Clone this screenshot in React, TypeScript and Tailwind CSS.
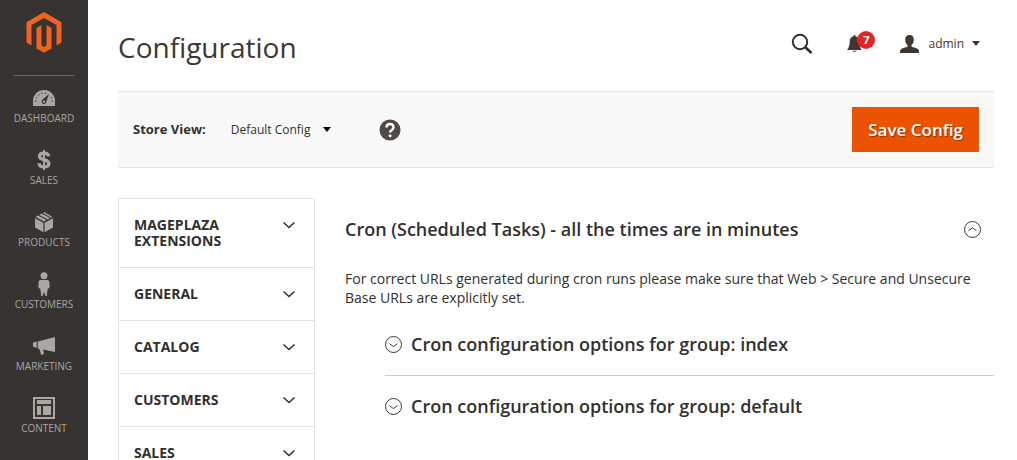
import type { ReactNode } from "react";

const menu: { label: string; icon: ReactNode }[] = [
  {
    label: "DASHBOARD",
    icon: (
      <svg width="22" height="16" viewBox="0 0 22 16" fill="currentColor">
        <path d="M0 16v-5a11 11 0 0 1 22 0v5z" />
        <g fill="#373330">
          <circle cx="2.8" cy="11" r=".7" />
          <circle cx="3.6" cy="7.6" r=".7" />
          <circle cx="5.8" cy="4.8" r=".7" />
          <circle cx="9" cy="3.2" r=".7" />
          <circle cx="12.6" cy="3.2" r=".7" />
          <circle cx="18.4" cy="7.6" r=".7" />
          <circle cx="19.2" cy="11" r=".7" />
          <path d="M16 4l-2.6 7.4a2.4 2.4 0 1 1-3.8-1.8zM11 10.4a1.2 1.2 0 1 0 .1 0z" fillRule="evenodd" />
        </g>
      </svg>
    ),
  },
  {
    label: "SALES",
    icon: (
      <svg width="14" height="22" viewBox="0 0 14 22" fill="none" stroke="currentColor">
        <path d="M7 1v20" strokeWidth="2" />
        <path
          d="M11.7 7.4C11.4 5 9.6 4.100 7 4.100S2.500 5.200 2.500 7.300c0 4.900 9.400 2.300 9.400 7.200 0 2.300-2 3.400-4.900 3.400s-4.800-1.300-5-3.800"
          strokeWidth="3.200"
        />
      </svg>
    ),
  },
  {
    label: "PRODUCTS",
    icon: (
      <svg width="20" height="22" viewBox="0 0 20 22" fill="currentColor">
        <path d="M9.400 21.300L1 16.600V7.200l8.400 4.500zM10.600 21.300l8.400-4.700V7.200l-8.400 4.500z" />
        <path d="M1.600 6l2.500-1.400 8.300 4.500L10 10.500zM5.400 3.900L7.700 2.600l8.300 4.600-2.300 1.200zM9 1.900L10.300 1.100l8.100 4.900-1.200.7z" />
      </svg>
    ),
  },
  {
    label: "CUSTOMERS",
    icon: (
      <svg width="12" height="25" viewBox="0 0 12 25" fill="currentColor">
        <circle cx="6" cy="3.700" r="3.500" />
        <path d="M3 8h6c1.700 0 2.500 1 2.500 2.500V16l-1.800.800L8.700 24H7.300L6 19.500 4.700 24H3.300l-1-7.200L.5 16v-5.500C.5 9 1.300 8 3 8z" />
      </svg>
    ),
  },
  {
    label: "MARKETING",
    icon: (
      <svg width="22" height="18" viewBox="0 0 22 18" fill="currentColor">
        <path d="M0 5.500L3.800 4.500v6.200L0 9.800zM4.800 4.400L22 0v15L10 12.400l1.100 4.600-2.900 1-2-6.200-1.400-.4z" />
      </svg>
    ),
  },
  {
    label: "CONTENT",
    icon: (
      <svg width="22" height="22" viewBox="0 0 22 22" fill="currentColor">
        <path d="M0 0h22v22H0zM2 2v18h18V2z" fillRule="evenodd" />
        <path d="M4 3h14v4H4zM4 9h4v9H4zM10 9h8v9h-8z" />
      </svg>
    ),
  },
];

const tabs = ["MAGEPLAZA EXTENSIONS", "GENERAL", "CATALOG", "CUSTOMERS", "SALES"];

const groups = [
  "Cron configuration options for group: index",
  "Cron configuration options for group: default",
];

function CircleArrow({ up = false }: { up?: boolean }) {
  return (
    <svg width="17" height="17" viewBox="0 0 17 17" fill="none" stroke="#41362f" className="shrink-0">
      <circle cx="8.500" cy="8.500" r="8" />
      <path d={up ? "M4.500 9.700l4-2.900 4 2.900" : "M4.500 7.700l4 2.900 4-2.900"} />
    </svg>
  );
}

function Caret() {
  return (
    <svg width="8" height="5" viewBox="0 0 8 5" fill="currentColor">
      <path d="M0 0h8L4 5z" />
    </svg>
  );
}

function Sidebar() {
  return (
    <nav className="w-[88px] shrink-0 bg-[#373330]">
      <a href="#" aria-label="Home" className="mx-[14px] flex h-[76px] justify-center border-b border-[#736963] pt-3">
        <svg width="36" height="41" viewBox="0 0 36 41" fill="#f26322">
          <path d="M18 0l17.500 10.200v20.400l-5 2.900V13.100L18 5.900 5.500 13.100v20.400l-5-2.900V10.200z" />
          <path d="M10.500 16l5-2.900v20.400l2.500 1.500 2.500-1.500V13.100l5 2.900v20.400L18 40.800l-7.500-4.400z" />
        </svg>
      </a>
      <ul>
        {menu.map((item) => (
          <li key={item.label}>
            <a href="#" className="flex h-[62px] flex-col items-center pt-[10px] text-[10px] leading-4 text-[#aaa6a0]">
              <span className="flex h-6 items-center">{item.icon}</span>
              {item.label}
            </a>
          </li>
        ))}
      </ul>
    </nav>
  );
}

function Header() {
  return (
    <header className="flex h-[91px] items-center text-[#41362f]">
      <h1 className="flex-1 pt-[2px] text-[28px] leading-9">Configuration</h1>
      <div className="mr-[14px] flex items-center pb-1">
        <button type="button" aria-label="Search">
          <svg width="22" height="22" viewBox="0 0 22 22" fill="none" stroke="#33302d">
            <circle cx="9" cy="9" r="7.200" strokeWidth="2" />
            <path d="M14 14l6.500 6" strokeWidth="2.700" />
          </svg>
        </button>
        <button type="button" aria-label="Notifications" className="relative ml-[34px]">
          <svg width="15" height="18" viewBox="0 0 15 18" fill="currentColor">
            <path d="M7.500 0c.8 0 1 .6 1 1.200 2.500.6 3.700 2.600 3.700 5.300 0 4 .7 6 2.600 8.500H0c1.900-2.500 2.700-4.500 2.700-8.500C2.700 3.800 4 1.800 6.500 1.200 6.500.6 6.700 0 7.500 0zM5.500 15.700h4c-.3 1.400-3.700 1.400-4 0z" />
          </svg>
          <span className="absolute -top-1 left-[10px] size-[18px] rounded-full bg-[#e22626] text-center text-[11px] leading-[18px] font-bold text-white">
            7
          </span>
        </button>
        <button type="button" className="ml-[38px] flex items-center text-[12px]">
          <svg width="19" height="18" viewBox="0 0 19 18" fill="currentColor">
            <path d="M9.500 0c2.900 0 4.300 1.900 4.300 4.700 0 2.300-.9 4.200-2.300 5.200v1.600c1 1.100 7.500 1.400 7.500 4.500v2H0v-2c0-3.100 6.500-3.400 7.500-4.500V9.900C6.100 8.900 5.200 7 5.200 4.700 5.200 1.900 6.600 0 9.500 0z" />
          </svg>
          <span className="mr-[8px] ml-[9px]">admin</span>
          <Caret />
        </button>
      </div>
    </header>
  );
}

function Toolbar() {
  return (
    <div className="flex items-center border-y border-[#e3e3e3] bg-[#f8f8f8] p-[15px]">
      <label htmlFor="store-view" className="text-[13px] font-bold text-[#303030]">
        Store View:
      </label>
      <div className="relative ml-[25px] flex items-center">
        <select id="store-view" className="appearance-none bg-transparent pr-5 text-[12px] text-[#303030]">
          <option>Default Config</option>
        </select>
        <span className="pointer-events-none absolute right-0 text-black">
          <Caret />
        </span>
      </div>
      <button type="button" aria-label="Help" className="ml-12">
        <svg width="22" height="22" viewBox="0 0 22 22">
          <circle cx="11" cy="11" r="10.500" fill="#514943" />
          <path d="M7.500 8.500c0-4.600 7-4.600 7 0 0 2.600-3.400 2.400-3.400 5" fill="none" stroke="#fff" strokeWidth="2.500" />
          <circle cx="11.100" cy="16.700" r="1.500" fill="#fff" />
        </svg>
      </button>
      <button
        type="button"
        className="ml-auto h-[45px] bg-[#eb5202] px-4 text-[17px] leading-6 font-semibold text-white [text-shadow:1px_1px_1px_rgba(0,0,0,0.4)]"
      >
        Save Config
      </button>
    </div>
  );
}

function ConfigTabs() {
  return (
    <div className="w-[197px] shrink-0 border border-[#e3e3e3]">
      {tabs.map((tab) => (
        <button
          key={tab}
          type="button"
          className="flex w-full items-start justify-between border-b border-[#e3e3e3] py-[18px] pr-[18px] pl-[15px] text-left text-[14px] leading-4 font-bold text-[#303030]"
        >
          <span className="w-[110px]">{tab}</span>
          <svg width="14" height="16" viewBox="0 0 14 16" fill="none" stroke="#303030" strokeWidth="1.500">
            <path d="M1.500 5.500L7 10.500l5.500-5" />
          </svg>
        </button>
      ))}
    </div>
  );
}

function CronSection() {
  return (
    <section className="min-w-0 flex-1 pt-[19px] text-[#303030]">
      <button type="button" className="flex w-full items-center justify-between pr-[13px] text-left">
        <h2 className="text-[18px] leading-6 font-semibold">
          Cron (Scheduled Tasks) - all the times are in minutes
        </h2>
        <CircleArrow up />
      </button>
      <p className="mt-[28px] pr-4 text-[14px] leading-[19px]">
        For correct URLs generated during cron runs please make sure that Web &gt; Secure and Unsecure Base URLs are
        explicitly set.
      </p>
      <div className="mt-[7px] ml-10 divide-y divide-[#cccccc]">
        {groups.map((group) => (
          <button key={group} type="button" className="flex w-full items-center gap-[9px] py-[18px] text-left">
            <CircleArrow />
            <h3 className="text-[18px] leading-[25px] font-semibold">{group}</h3>
          </button>
        ))}
      </div>
    </section>
  );
}

export default function App() {
  return (
    <div className="flex h-screen overflow-hidden bg-white font-['Open_Sans',sans-serif]">
      <Sidebar />
      <main className="min-w-0 flex-1 pr-[23px] pl-[30px]">
        <Header />
        <Toolbar />
        <div className="mt-[30px] flex items-start gap-[30px]">
          <ConfigTabs />
          <CronSection />
        </div>
      </main>
    </div>
  );
}
